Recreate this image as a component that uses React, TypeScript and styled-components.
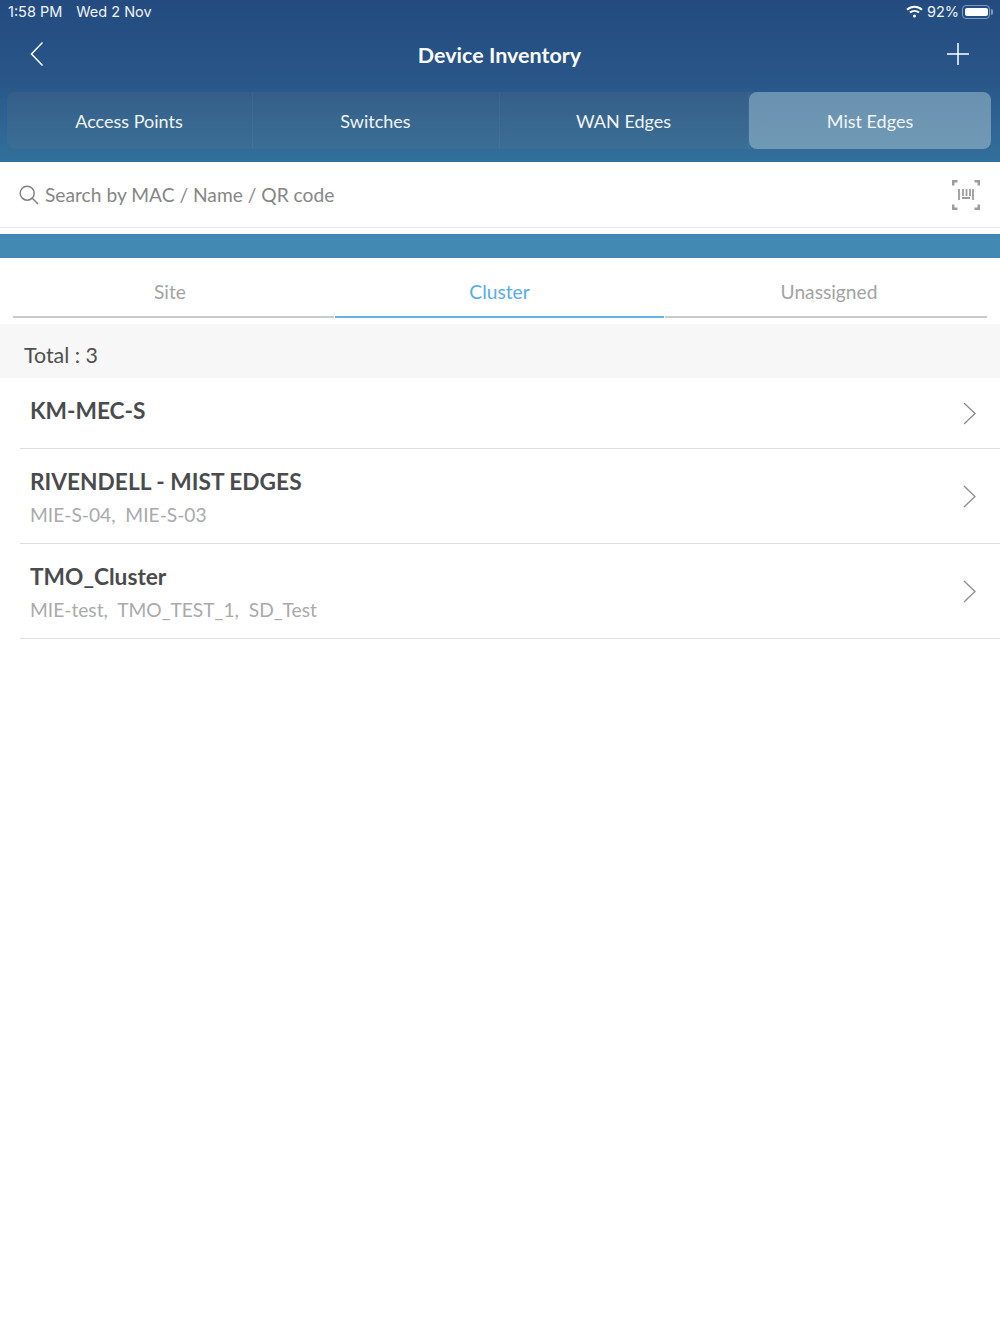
import React from 'react';
import styled, { createGlobalStyle } from 'styled-components';

const clusters = [
  { name: 'KM-MEC-S', edges: '' },
  { name: 'RIVENDELL - MIST EDGES', edges: 'MIE-S-04,\u00a0 MIE-S-03' },
  { name: 'TMO_Cluster', edges: 'MIE-test,\u00a0 TMO_TEST_1,\u00a0 SD_Test' },
];

const App = () => {
  return (
    <Page>
      <GlobalStyle />
      <Header>
        <StatusBar>
          <StatusGroup>
            <span>1:58 PM</span>
            <span>Wed 2 Nov</span>
          </StatusGroup>
          <StatusRight>
            <svg width="17" height="13" viewBox="0 0 17 13" fill="none" stroke="#fff" strokeWidth="2">
              <path d="M1 4.800C5.400.8 11.600.8 16 4.800" />
              <path d="M3.900 7.600c2.700-2.300 6.500-2.300 9.200 0" />
              <circle cx="8.500" cy="11" r="1.500" fill="#fff" stroke="none" />
            </svg>
            <Percent>92%</Percent>
            <Battery>
              <BatteryFill />
            </Battery>
          </StatusRight>
        </StatusBar>
        <NavBar>
          <NavSide>
            <svg width="16" height="26" viewBox="0 0 16 26" fill="none" stroke="#fff" strokeWidth="1.500">
              <path d="M13.500 1.500 2.500 13l11 11.500" />
            </svg>
          </NavSide>
          <Title>Device Inventory</Title>
          <NavSide $right>
            <svg width="24" height="24" viewBox="0 0 24 24" fill="none" stroke="#fff" strokeWidth="1.500">
              <path d="M12 1v22M1 12h22" />
            </svg>
          </NavSide>
        </NavBar>
        <Segments>
          <Segment>Access Points</Segment>
          <Segment>Switches</Segment>
          <Segment>WAN Edges</Segment>
          <ActiveSegment>Mist Edges</ActiveSegment>
        </Segments>
      </Header>

      <SearchBar>
        <svg width="20" height="20" viewBox="0 0 20 20" fill="none" stroke="#808080" strokeWidth="1.500">
          <circle cx="8.200" cy="8.200" r="7" />
          <path d="m13.300 13.300 5.700 5.700" />
        </svg>
        <SearchText>Search by MAC / Name / QR code</SearchText>
        <svg width="28" height="30" viewBox="0 0 28 30" fill="none" stroke="#9c9c9c" strokeWidth="2.500">
          <path d="M1.200 5.500V1.200h4.300M22.500 1.200h4.300v4.300M1.200 24.500v4.300h4.300M26.800 24.500v4.300h-4.300" />
          <path d="M7 9v11M21 9v11M11 9v7M14.500 9v7M18 9v7M10 18h8" strokeWidth="1.800" />
        </svg>
      </SearchBar>

      <BlueBar />

      <Tabs>
        <SiteTab>Site</SiteTab>
        <ActiveTab>Cluster</ActiveTab>
        <UnassignedTab>Unassigned</UnassignedTab>
      </Tabs>

      <TotalRow>Total : 3</TotalRow>

      {clusters.map((c) => (
        <Row key={c.name} $short={!c.edges}>
          <RowText>
            <RowName>{c.name}</RowName>
            {c.edges && <RowEdges>{c.edges}</RowEdges>}
          </RowText>
          <svg width="13" height="24" viewBox="0 0 13 24" fill="none" stroke="#8c8c8c" strokeWidth="1.300">
            <path d="m1 2 11 10.500L1 23" />
          </svg>
        </Row>
      ))}
    </Page>
  );
};

export default App;

const GlobalStyle = createGlobalStyle`
  body {
    margin: 0;
    background: #fff;
    font-family: Lato, "Liberation Sans", sans-serif;
  }
`;

const Page = styled.div`
  width: 1000px;
  min-height: 1334px;
  background: #fff;
`;

const Header = styled.header`
  height: 162px;
  background: linear-gradient(180deg, #234b80 0%, #295689 50%, #33709c 100%);
  color: #fff;
`;

const StatusBar = styled.div`
  height: 23px;
  padding: 0 8px;
  display: flex;
  justify-content: space-between;
  align-items: center;
  font-family: Inter, "Liberation Sans", sans-serif;
  font-size: 14.500px;
  color: #f0f4f8;
`;

const StatusGroup = styled.div`
  display: flex;
  gap: 14px;
`;

const StatusRight = styled.div`
  display: flex;
  align-items: center;
  gap: 4px;
`;

const Percent = styled.span`
  margin-left: 0;
`;

const Battery = styled.div`
  position: relative;
  width: 28px;
  height: 14px;
  padding: 2px;
  box-sizing: border-box;
  margin-right: 2px;
  margin-left: -1px;
  border: 1px solid #7f9cbd;
  border-radius: 4px;

  &::after {
    content: '';
    position: absolute;
    right: -4px;
    top: 3px;
    width: 2px;
    height: 6px;
    background: #7f9cbd;
    border-radius: 0 2px 2px 0;
  }
`;

const BatteryFill = styled.div`
  width: 23px;
  height: 8px;
  background: #fff;
  border-radius: 2px;
`;

const NavBar = styled.div`
  height: 62px;
  padding: 0 30px 0 29px;
  box-sizing: border-box;
  display: grid;
  grid-template-columns: 1fr auto 1fr;
  align-items: center;
`;

const NavSide = styled.div<{ $right?: boolean }>`
  display: flex;
  justify-content: ${(p) => (p.$right ? 'flex-end' : 'flex-start')};
`;

const Title = styled.div`
  font-size: 21.500px;
  font-weight: 700;
  color: #fbfcfd;
  margin-top: 1px;
`;

const Segments = styled.div`
  margin: 7px 9px 0 7px;
  height: 57px;
  display: grid;
  grid-template-columns: 246px 247px 249px 242px;
  background: rgba(130, 130, 120, 0.12);
  border-radius: 8px;
`;

const Segment = styled.div`
  display: flex;
  align-items: center;
  justify-content: center;
  padding-right: 2px;
  font-size: 18px;
  color: #f1f5f8;
  box-shadow: inset -1px 0 0 rgba(255, 255, 255, 0.04);
`;

const ActiveSegment = styled(Segment)`
  padding-right: 0;
  background: linear-gradient(180deg, #6a92b0 0%, #7099b6 100%);
  border-radius: 8px;
  box-shadow: none;
`;

const SearchBar = styled.div`
  height: 66px;
  padding: 0 20px 0 19px;
  display: flex;
  align-items: center;
  box-sizing: border-box;
  border-bottom: 1px solid #e4e4e4;
`;

const SearchText = styled.div`
  flex: 1;
  margin-left: 6px;
  font-size: 19.200px;
  color: #868686;
`;

const BlueBar = styled.div`
  height: 24px;
  margin-top: 6px;
  background: #428ab4;
`;

const Tabs = styled.div`
  height: 60px;
  padding: 0 13px;
  display: grid;
  grid-template-columns: 321px 329px 322px;
  gap: 1px;
`;

const Tab = styled.div`
  display: flex;
  align-items: center;
  justify-content: center;
  padding-top: 8px;
  box-sizing: border-box;
  font-size: 19.200px;
  color: #a3a3a3;
  border-bottom: 2px solid #cbcbcb;
`;

const SiteTab = styled(Tab)`
  padding-right: 7px;
`;

const UnassignedTab = styled(Tab)`
  padding-left: 6px;
`;

const ActiveTab = styled(Tab)`
  color: #56aceb;
  border-bottom: 2px solid #65b1ea;
`;

const TotalRow = styled.div`
  height: 54px;
  margin-top: 6px;
  padding: 7px 24px 0;
  box-sizing: border-box;
  display: flex;
  align-items: center;
  background: #f7f7f7;
  font-size: 21.400px;
  color: #4f4f4f;
`;

const Row = styled.div<{ $short: boolean }>`
  height: ${(p) => (p.$short ? 71 : 95)}px;
  margin-left: 20px;
  padding: 0 24px 0 10px;
  display: flex;
  justify-content: space-between;
  align-items: center;
  box-sizing: border-box;
  border-bottom: 1px solid #dedede;
`;

const RowText = styled.div`
  align-self: flex-start;
  padding-top: 18px;
`;

const RowName = styled.div`
  font-size: 22.700px;
  line-height: 30px;
  font-weight: 700;
  color: #4a4b4d;
`;

const RowEdges = styled.div`
  margin-top: 6px;
  font-size: 19.200px;
  line-height: 24px;
  color: #aaaaaa;
`;
